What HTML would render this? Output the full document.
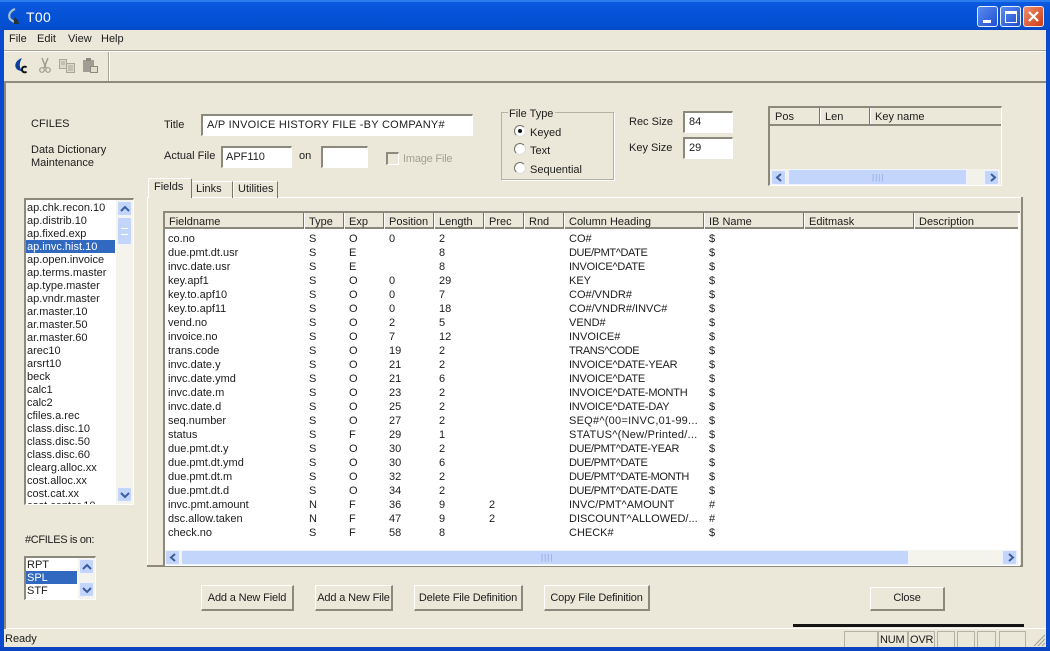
<!DOCTYPE html>
<html><head><meta charset="utf-8"><style>
html,body{margin:0;padding:0;width:1050px;height:651px;overflow:hidden;background:#ebe8d9}
body{position:relative;font-family:"Liberation Sans",sans-serif;font-size:11px;color:#1c1c1c}
.b,.t{position:absolute;box-sizing:border-box}
.t{white-space:nowrap;line-height:13px;height:13px;margin-top:1px}
.in{background:#fff;border:1px solid #fff;border-top:2px solid #8b897c;border-left:2px solid #8b897c}
.h{position:absolute;top:0;height:16px;border-right:1px solid #77756a;box-shadow:1px 0 0 #fff;box-sizing:border-box;padding:2px 0 0 4px;line-height:14px;white-space:nowrap}
.sb{position:absolute;background:#c3d5fb;border:1px solid #eef3fe;border-radius:2px;box-sizing:border-box;color:#3b5c9f}
.btn{position:absolute;top:585px;height:26px;background:#ebe8d9;border:1px solid #fff;border-right:2px solid #8b897c;border-bottom:2px solid #8b897c;box-sizing:border-box;text-align:center;line-height:25px;white-space:nowrap;letter-spacing:-.15px}
.sel{background:#3168c0;color:#fff}
svg{position:absolute;display:block}
.r{position:absolute;left:0;width:1050px;height:13px;line-height:13px;white-space:nowrap}
.r span{position:absolute;top:0}
.a{left:168px}.c{left:309px}.d{left:349px}.e{left:389px}.f{left:439px}.g{left:489px}.i{left:569px}.j{left:709px}
.s4{letter-spacing:-.4px}.s3{letter-spacing:-.25px}.w{letter-spacing:.25px}
</style></head><body>

<div class="b" style="left:0;top:0;width:1050px;height:30px;background:linear-gradient(#0a5fe0 0,#0a58df 4px,#0552d6 15px,#0350d2 26px,#0348c2 30px)"></div>
<div class="b" style="left:0;top:0;width:1050px;height:2px;background:#2b7cf0"></div>
<div class="b" style="left:0;top:30px;width:4px;height:621px;background:#0a4ad0"></div>
<div class="b" style="left:1046px;top:30px;width:4px;height:621px;background:#0a4ad0"></div>
<div class="b" style="left:0;top:647px;width:1050px;height:4px;background:#0a44c0"></div>
<svg style="left:7px;top:8px" width="14" height="17" viewBox="0 0 14 17"><path d="M8 1C3 3 1 7 3 11l4 3" fill="none" stroke="#a9c0cc" stroke-width="2.200"/><path d="M7 9l4 3 1 4H7z" fill="#26323c"/></svg>
<div class="t" style="left:26px;top:8px;color:#fff;font-size:14px;height:16px;line-height:16px;letter-spacing:.3px">T00</div>
<div class="b" style="left:977px;top:6px;width:21px;height:21px;background:linear-gradient(135deg,#5c8bf0,#1f4fd0);border:1px solid #e6eeff;border-radius:3px"><div class="b" style="left:5px;top:13px;width:8px;height:3px;background:#fff"></div></div>
<div class="b" style="left:1000px;top:6px;width:21px;height:21px;background:linear-gradient(135deg,#5c8bf0,#1f4fd0);border:1px solid #e6eeff;border-radius:3px"><div class="b" style="left:4px;top:4px;width:12px;height:12px;border:1px solid #fff;border-top:3px solid #fff"></div></div>
<div class="b" style="left:1023px;top:6px;width:21px;height:21px;background:linear-gradient(135deg,#ec8d70,#cf3c14);border:1px solid #f5e6e0;border-radius:3px"><svg style="left:3px;top:3px" width="13" height="13"><path d="M2 2L11 11M11 2L2 11" stroke="#fff" stroke-width="2.200"/></svg></div>

<div class="t" style="left:9px;top:32px">File</div>
<div class="t" style="left:37px;top:32px">Edit</div>
<div class="t" style="left:68px;top:32px">View</div>
<div class="t" style="left:101px;top:32px">Help</div>
<div class="b" style="left:4px;top:50px;width:1042px;height:1px;background:#a7a597"></div>
<div class="b" style="left:4px;top:51px;width:1042px;height:1px;background:#fff"></div>

<svg style="left:14px;top:57px" width="14" height="17" viewBox="0 0 14 17"><path d="M8 1C2 3 0 8 2 11c1 2 4 3 6 3C5 10 5 6 8 1z" fill="#0b3f9c"/><path d="M12.500 10.500c-1-1.500-4.500-1-4.500 2s3.500 3.500 4.500 2" fill="none" stroke="#111" stroke-width="1.900"/></svg>
<svg style="left:39px;top:57px" width="12" height="17" viewBox="0 0 12 17"><path d="M3 1l4 10M9 1L5 11" stroke="#9b9a8e" stroke-width="1.400" fill="none"/><circle cx="3" cy="13" r="2.300" fill="none" stroke="#9b9a8e" stroke-width="1.200"/><circle cx="9" cy="13" r="2.300" fill="none" stroke="#9b9a8e" stroke-width="1.200"/></svg>
<svg style="left:59px;top:59px" width="17" height="14" viewBox="0 0 17 14"><path d="M.5 .5h7v9h-7zM7.500 4.500h8v9h-8z" fill="#dcd9ca" stroke="#a8a699"/><path d="M2 3h4M2 5h4M9 7h5M9 9h5M9 11h5" stroke="#a8a699"/></svg>
<svg style="left:82px;top:58px" width="17" height="15" viewBox="0 0 17 15"><path d="M1 2h11v12H1z" fill="#a09e92"/><path d="M4 0h5v3H4z" fill="#8c8a7f"/><path d="M8.500 8.500h7v6h-7z" fill="#e0ddce" stroke="#8c8a7f"/></svg>
<div class="b" style="left:108px;top:52px;width:1px;height:29px;background:#a7a597"></div>
<div class="b" style="left:109px;top:52px;width:1px;height:29px;background:#fff"></div>
<div class="b" style="left:4px;top:81px;width:1042px;height:2px;background:#8d8b7e"></div>
<div class="b" style="left:4px;top:83px;width:2px;height:546px;background:#8d8b7e"></div>

<div class="t" style="left:31px;top:117px">CFILES</div>
<div class="t" style="left:31px;top:143px">Data Dictionary</div>
<div class="t" style="left:31px;top:156px">Maintenance</div>

<div class="t" style="left:164px;top:118px">Title</div>
<div class="b in" style="left:201px;top:114px;width:272px;height:22px"></div>
<div class="t w" style="left:207px;top:118px">A/P INVOICE HISTORY FILE -BY COMPANY#</div>
<div class="t" style="left:164px;top:149px">Actual File</div>
<div class="b in" style="left:221px;top:146px;width:71px;height:22px"></div>
<div class="t" style="left:226px;top:150px">APF110</div>
<div class="t" style="left:299px;top:149px">on</div>
<div class="b in" style="left:321px;top:146px;width:47px;height:22px"></div>
<div class="b" style="left:386px;top:152px;width:13px;height:13px;border:1px solid #fff;border-top:2px solid #8d8b7e;border-left:2px solid #8d8b7e"></div>
<div class="t" style="left:403px;top:152px;color:#a3a194;letter-spacing:-.2px">Image File</div>

<div class="b" style="left:501px;top:112px;width:113px;height:68px;border:1px solid #b4b2a4;box-shadow:1px 1px 0 #fff"></div>
<div class="t" style="left:508px;top:107px;background:#ebe8d9;padding:0 2px 0 1px;margin-top:0;padding-top:1px;height:14px">File Type</div>
<div class="b" style="left:514px;top:125px;width:12px;height:12px;border-radius:50%;background:#fff;border:1px solid #ddd;border-top-color:#716f64;border-left-color:#716f64"></div>
<div class="b" style="left:518px;top:129px;width:4px;height:4px;border-radius:50%;background:#111"></div>
<div class="t" style="left:530px;top:126px">Keyed</div>
<div class="b" style="left:514px;top:143px;width:12px;height:12px;border-radius:50%;background:#fff;border:1px solid #ddd;border-top-color:#716f64;border-left-color:#716f64"></div>
<div class="t" style="left:530px;top:144px">Text</div>
<div class="b" style="left:514px;top:162px;width:12px;height:12px;border-radius:50%;background:#fff;border:1px solid #ddd;border-top-color:#716f64;border-left-color:#716f64"></div>
<div class="t" style="left:530px;top:163px">Sequential</div>

<div class="t" style="left:629px;top:115px">Rec Size</div>
<div class="b in" style="left:683px;top:111px;width:50px;height:22px"></div>
<div class="t" style="left:689px;top:115px">84</div>
<div class="t" style="left:629px;top:141px">Key Size</div>
<div class="b in" style="left:683px;top:137px;width:50px;height:22px"></div>
<div class="t" style="left:689px;top:141px">29</div>

<div class="b" style="left:768px;top:106px;width:234px;height:80px;border-top:2px solid #8b897c;border-left:2px solid #8b897c;border-right:1px solid #fff;border-bottom:1px solid #fff">
 <div class="h" style="left:0;width:50px;padding-left:5px">Pos</div>
 <div class="h" style="left:50px;width:50px;padding-left:5px">Len</div>
 <div class="h" style="left:100px;width:131px;border-right:0;box-shadow:none;padding-left:5px">Key name</div>
 <div class="b" style="left:0;top:16px;width:231px;height:2px;background:#8b897c"></div>
</div>
<div class="b" style="left:770px;top:169px;width:230px;height:16px;background:#f3f2ea"></div>
<div class="sb" style="left:771px;top:170px;width:15px;height:15px"><svg style="left:3px;top:2px" width="9" height="9"><path d="M6 1L2 4.500 6 8" fill="none" stroke="#3b5c9f" stroke-width="2"/></svg></div>
<div class="sb" style="left:788px;top:169px;width:179px;height:16px"></div>
<div class="t" style="left:872px;top:170px;color:#8aa5dc;font-size:8px;letter-spacing:1px">||||</div>
<div class="sb" style="left:984px;top:170px;width:15px;height:15px"><svg style="left:3px;top:2px" width="9" height="9"><path d="M3 1l4 3.500L3 8" fill="none" stroke="#3b5c9f" stroke-width="2"/></svg></div>

<!-- tabs -->
<div class="b" style="left:147px;top:197px;width:876px;height:1px;background:#fff"></div>
<div class="b" style="left:147px;top:197px;width:1px;height:370px;background:#fff"></div>
<div class="b" style="left:1021px;top:197px;width:2px;height:370px;background:#8b897c"></div>
<div class="b" style="left:147px;top:565px;width:876px;height:2px;background:#8b897c"></div>
<div class="b" style="left:148px;top:178px;width:44px;height:20px;background:#ebe8d9;border:1px solid #fff;border-bottom:0;border-right:1px solid #77756a;border-radius:2px 2px 0 0"></div>
<div class="t" style="left:154px;top:180px">Fields</div>
<div class="b" style="left:192px;top:181px;width:41px;height:17px;border-top:1px solid #fff;border-right:1px solid #77756a"></div>
<div class="t" style="left:196px;top:182px">Links</div>
<div class="b" style="left:233px;top:181px;width:45px;height:17px;border-top:1px solid #fff;border-left:1px solid #fff;border-right:1px solid #77756a"></div>
<div class="t" style="left:238px;top:182px">Utilities</div>

<!-- grid -->
<div class="b" style="left:163px;top:211px;width:857px;height:355px;background:#fff;border-top:2px solid #8b897c;border-left:2px solid #8b897c"></div>
<div class="b" style="left:165px;top:213px;width:853px;height:16px;background:#ebe8d9;border-bottom:2px solid #8b897c"></div>
<div style="position:absolute;left:165px;top:213px;width:853px;height:16px">
 <div class="h" style="left:0;width:139px">Fieldname</div>
 <div class="h" style="left:139px;width:40px;padding-left:5px">Type</div>
 <div class="h" style="left:179px;width:40px;padding-left:5px">Exp</div>
 <div class="h" style="left:219px;width:50px;padding-left:5px">Position</div>
 <div class="h" style="left:269px;width:50px;padding-left:5px">Length</div>
 <div class="h" style="left:319px;width:40px;padding-left:5px">Prec</div>
 <div class="h" style="left:359px;width:40px;padding-left:5px">Rnd</div>
 <div class="h" style="left:399px;width:140px;padding-left:5px">Column Heading</div>
 <div class="h" style="left:539px;width:100px;padding-left:5px">IB Name</div>
 <div class="h" style="left:639px;width:110px;padding-left:5px">Editmask</div>
 <div class="h" style="left:749px;width:104px;padding-left:5px;border-right:0;box-shadow:none">Description</div>
</div>

<div class="r" style="top:233px"><span class="a">co.no</span><span class="c">S</span><span class="d">O</span><span class="e">0</span><span class="f">2</span><span class="i">CO#</span><span class="j">$</span></div>
<div class="r" style="top:247px"><span class="a">due.pmt.dt.usr</span><span class="c">S</span><span class="d">E</span><span class="f">8</span><span class="i s4">DUE/PMT^DATE</span><span class="j">$</span></div>
<div class="r" style="top:261px"><span class="a">invc.date.usr</span><span class="c">S</span><span class="d">E</span><span class="f">8</span><span class="i s3">INVOICE^DATE</span><span class="j">$</span></div>
<div class="r" style="top:275px"><span class="a">key.apf1</span><span class="c">S</span><span class="d">O</span><span class="e">0</span><span class="f">29</span><span class="i">KEY</span><span class="j">$</span></div>
<div class="r" style="top:289px"><span class="a">key.to.apf10</span><span class="c">S</span><span class="d">O</span><span class="e">0</span><span class="f">7</span><span class="i">CO#/VNDR#</span><span class="j">$</span></div>
<div class="r" style="top:303px"><span class="a">key.to.apf11</span><span class="c">S</span><span class="d">O</span><span class="e">0</span><span class="f">18</span><span class="i">CO#/VNDR#/INVC#</span><span class="j">$</span></div>
<div class="r" style="top:317px"><span class="a">vend.no</span><span class="c">S</span><span class="d">O</span><span class="e">2</span><span class="f">5</span><span class="i">VEND#</span><span class="j">$</span></div>
<div class="r" style="top:331px"><span class="a">invoice.no</span><span class="c">S</span><span class="d">O</span><span class="e">7</span><span class="f">12</span><span class="i">INVOICE#</span><span class="j">$</span></div>
<div class="r" style="top:345px"><span class="a">trans.code</span><span class="c">S</span><span class="d">O</span><span class="e">19</span><span class="f">2</span><span class="i s4">TRANS^CODE</span><span class="j">$</span></div>
<div class="r" style="top:359px"><span class="a">invc.date.y</span><span class="c">S</span><span class="d">O</span><span class="e">21</span><span class="f">2</span><span class="i s3">INVOICE^DATE-YEAR</span><span class="j">$</span></div>
<div class="r" style="top:373px"><span class="a">invc.date.ymd</span><span class="c">S</span><span class="d">O</span><span class="e">21</span><span class="f">6</span><span class="i s3">INVOICE^DATE</span><span class="j">$</span></div>
<div class="r" style="top:387px"><span class="a">invc.date.m</span><span class="c">S</span><span class="d">O</span><span class="e">23</span><span class="f">2</span><span class="i s3">INVOICE^DATE-MONTH</span><span class="j">$</span></div>
<div class="r" style="top:401px"><span class="a">invc.date.d</span><span class="c">S</span><span class="d">O</span><span class="e">25</span><span class="f">2</span><span class="i s3">INVOICE^DATE-DAY</span><span class="j">$</span></div>
<div class="r" style="top:415px"><span class="a">seq.number</span><span class="c">S</span><span class="d">O</span><span class="e">27</span><span class="f">2</span><span class="i w">SEQ#^(00=INVC,01-99...</span><span class="j">$</span></div>
<div class="r" style="top:429px"><span class="a">status</span><span class="c">S</span><span class="d">F</span><span class="e">29</span><span class="f">1</span><span class="i w">STATUS^(New/Printed/...</span><span class="j">$</span></div>
<div class="r" style="top:443px"><span class="a">due.pmt.dt.y</span><span class="c">S</span><span class="d">O</span><span class="e">30</span><span class="f">2</span><span class="i s4">DUE/PMT^DATE-YEAR</span><span class="j">$</span></div>
<div class="r" style="top:457px"><span class="a">due.pmt.dt.ymd</span><span class="c">S</span><span class="d">O</span><span class="e">30</span><span class="f">6</span><span class="i s4">DUE/PMT^DATE</span><span class="j">$</span></div>
<div class="r" style="top:471px"><span class="a">due.pmt.dt.m</span><span class="c">S</span><span class="d">O</span><span class="e">32</span><span class="f">2</span><span class="i s4">DUE/PMT^DATE-MONTH</span><span class="j">$</span></div>
<div class="r" style="top:485px"><span class="a">due.pmt.dt.d</span><span class="c">S</span><span class="d">O</span><span class="e">34</span><span class="f">2</span><span class="i s4">DUE/PMT^DATE-DATE</span><span class="j">$</span></div>
<div class="r" style="top:499px"><span class="a">invc.pmt.amount</span><span class="c">N</span><span class="d">F</span><span class="e">36</span><span class="f">9</span><span class="g">2</span><span class="i">INVC/PMT^AMOUNT</span><span class="j">#</span></div>
<div class="r" style="top:513px"><span class="a">dsc.allow.taken</span><span class="c">N</span><span class="d">F</span><span class="e">47</span><span class="f">9</span><span class="g">2</span><span class="i">DISCOUNT^ALLOWED/...</span><span class="j">#</span></div>
<div class="r" style="top:527px"><span class="a">check.no</span><span class="c">S</span><span class="d">F</span><span class="e">58</span><span class="f">8</span><span class="i">CHECK#</span><span class="j">$</span></div>

<div class="b" style="left:165px;top:550px;width:853px;height:15px;background:#f5f4ec"></div>
<div class="sb" style="left:165px;top:550px;width:15px;height:15px"><svg style="left:3px;top:2px" width="9" height="9"><path d="M6 1L2 4.500 6 8" fill="none" stroke="#3b5c9f" stroke-width="2"/></svg></div>
<div class="sb" style="left:181px;top:550px;width:728px;height:15px"></div>
<div class="t" style="left:541px;top:550px;color:#8aa5dc;font-size:8px;letter-spacing:1px">||||</div>
<div class="sb" style="left:1002px;top:550px;width:15px;height:15px"><svg style="left:3px;top:2px" width="9" height="9"><path d="M3 1l4 3.500L3 8" fill="none" stroke="#3b5c9f" stroke-width="2"/></svg></div>

<!-- file list -->
<div class="b" style="left:24px;top:198px;width:110px;height:307px;background:#fff;border-top:2px solid #8b897c;border-left:2px solid #8b897c;border-right:1px solid #fff;border-bottom:1px solid #fff;overflow:hidden"></div>
<div class="b sel" style="left:26px;top:240px;width:89px;height:13px"></div>
<div class="t" style="left:27px;top:201px">ap.chk.recon.10</div>
<div class="t" style="left:27px;top:214px">ap.distrib.10</div>
<div class="t" style="left:27px;top:227px">ap.fixed.exp</div>
<div class="t" style="left:27px;top:240px;color:#fff">ap.invc.hist.10</div>
<div class="t" style="left:27px;top:253px">ap.open.invoice</div>
<div class="t" style="left:27px;top:266px">ap.terms.master</div>
<div class="t" style="left:27px;top:279px">ap.type.master</div>
<div class="t" style="left:27px;top:292px">ap.vndr.master</div>
<div class="t" style="left:27px;top:305px">ar.master.10</div>
<div class="t" style="left:27px;top:318px">ar.master.50</div>
<div class="t" style="left:27px;top:331px">ar.master.60</div>
<div class="t" style="left:27px;top:344px">arec10</div>
<div class="t" style="left:27px;top:357px">arsrt10</div>
<div class="t" style="left:27px;top:370px">beck</div>
<div class="t" style="left:27px;top:383px">calc1</div>
<div class="t" style="left:27px;top:396px">calc2</div>
<div class="t" style="left:27px;top:409px">cfiles.a.rec</div>
<div class="t" style="left:27px;top:422px">class.disc.10</div>
<div class="t" style="left:27px;top:435px">class.disc.50</div>
<div class="t" style="left:27px;top:448px">class.disc.60</div>
<div class="t" style="left:27px;top:461px">clearg.alloc.xx</div>
<div class="t" style="left:27px;top:474px">cost.alloc.xx</div>
<div class="t" style="left:27px;top:487px">cost.cat.xx</div>
<div class="b" style="left:26px;top:501px;width:89px;height:3px;overflow:hidden"><div class="t" style="left:1px;top:-1px;margin:0">cost.center.10</div></div>
<div class="b" style="left:116px;top:200px;width:17px;height:304px;background:#f5f4ec"></div>
<div class="sb" style="left:117px;top:201px;width:15px;height:15px"><svg style="left:2px;top:3px" width="10" height="8"><path d="M1 6l4-4 4 4" fill="none" stroke="#3b5c9f" stroke-width="2"/></svg></div>
<div class="sb" style="left:117px;top:217px;width:15px;height:28px"></div>
<div class="b" style="left:121px;top:228px;width:7px;height:7px;border-top:1px solid #fff;border-bottom:1px solid #fff"></div>
<div class="sb" style="left:117px;top:487px;width:15px;height:15px"><svg style="left:2px;top:3px" width="10" height="8"><path d="M1 2l4 4 4-4" fill="none" stroke="#3b5c9f" stroke-width="2"/></svg></div>

<div class="t" style="left:25px;top:533px;letter-spacing:-.35px">#CFILES is on:</div>
<div class="b" style="left:24px;top:556px;width:72px;height:44px;background:#fff;border-top:2px solid #8b897c;border-left:2px solid #8b897c;border-right:1px solid #fff;border-bottom:1px solid #fff"></div>
<div class="b sel" style="left:26px;top:571px;width:51px;height:13px"></div>
<div class="t" style="left:27px;top:558px">RPT</div>
<div class="t" style="left:27px;top:571px;color:#fff">SPL</div>
<div class="t" style="left:27px;top:584px">STF</div>
<div class="b" style="left:78px;top:558px;width:17px;height:41px;background:#f5f4ec"></div>
<div class="sb" style="left:79px;top:559px;width:15px;height:15px"><svg style="left:2px;top:3px" width="10" height="8"><path d="M1 6l4-4 4 4" fill="none" stroke="#3b5c9f" stroke-width="2"/></svg></div>
<div class="sb" style="left:79px;top:582px;width:15px;height:15px"><svg style="left:2px;top:3px" width="10" height="8"><path d="M1 2l4 4 4-4" fill="none" stroke="#3b5c9f" stroke-width="2"/></svg></div>

<div class="btn" style="left:201px;width:93px">Add a New Field</div>
<div class="btn" style="left:315px;width:78px">Add a New File</div>
<div class="btn" style="left:414px;width:109px">Delete File Definition</div>
<div class="btn" style="left:544px;width:106px">Copy File Definition</div>
<div class="btn" style="left:870px;width:75px;top:587px;height:24px;line-height:21px">Close</div>

<div class="b" style="left:793px;top:624px;width:231px;height:3px;background:#141414"></div>
<div class="b" style="left:6px;top:628px;width:1040px;height:1px;background:#fff"></div>
<div class="t" style="left:5px;top:632px">Ready</div>
<div class="b" style="left:844px;top:631px;width:34px;height:16px;border:1px solid #b4b2a4;border-bottom:0"></div>
<div class="b" style="left:878px;top:631px;width:30px;height:16px;border:1px solid #b4b2a4;border-bottom:0;padding:1px 0 0 1px;line-height:15px;letter-spacing:-.2px">NUM</div>
<div class="b" style="left:908px;top:631px;width:27px;height:16px;border:1px solid #b4b2a4;border-bottom:0;padding:1px 0 0 1px;line-height:15px;letter-spacing:-.2px">OVR</div>
<div class="b" style="left:937px;top:631px;width:18px;height:16px;border:1px solid #b4b2a4;border-bottom:0"></div>
<div class="b" style="left:957px;top:631px;width:18px;height:16px;border:1px solid #b4b2a4;border-bottom:0"></div>
<div class="b" style="left:977px;top:631px;width:19px;height:16px;border:1px solid #b4b2a4;border-bottom:0"></div>
<div class="b" style="left:999px;top:631px;width:27px;height:16px;border:1px solid #b4b2a4;border-bottom:0"></div>
<svg style="left:1033px;top:633px" width="13" height="14"><path d="M1 13L12 2M5 13l7-7M9 13l3-3" stroke="#a7a597" stroke-width="1.200"/></svg>
</body></html>
